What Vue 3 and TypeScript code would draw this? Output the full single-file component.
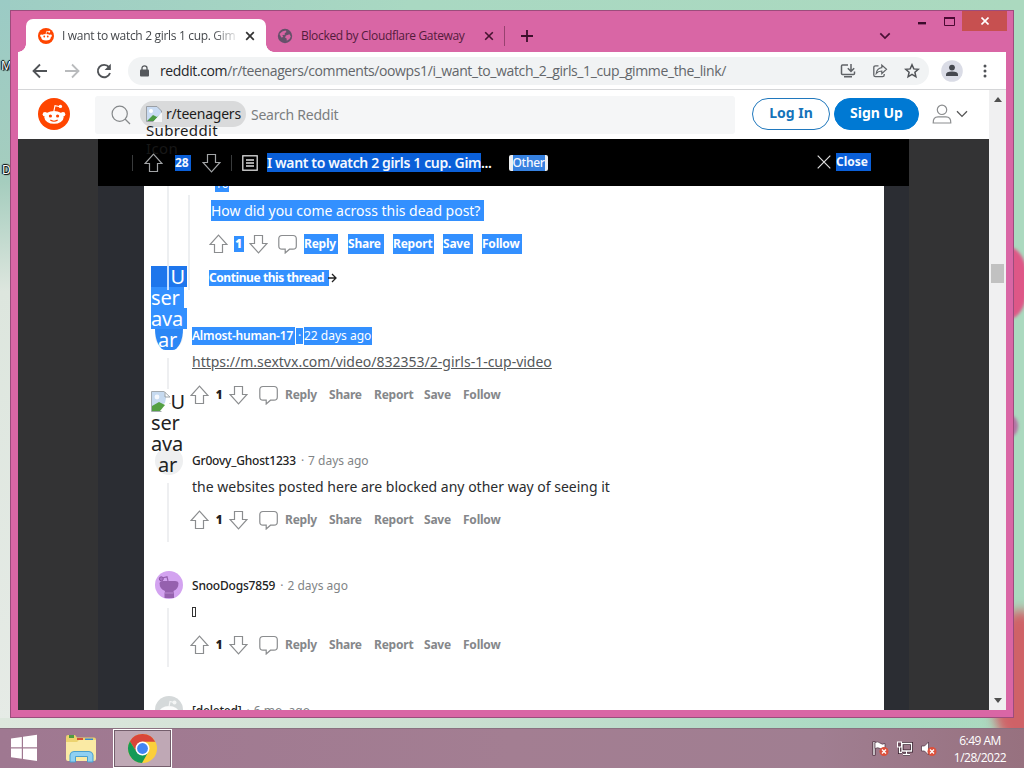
<script setup lang="ts">
interface Comment {
  user: string
  age: string
  body: string
  avatar: 'text' | 'snoo' | 'deleted'
  selected?: boolean
  link?: boolean
  missing?: boolean
}

const comments: Comment[] = [
  { user: 'Almost-human-17', age: '22 days ago', body: 'https://m.sextvx.com/video/832353/2-girls-1-cup-video', avatar: 'text', selected: true, link: true },
  { user: 'Gr0ovy_Ghost1233', age: '7 days ago', body: 'the websites posted here are blocked any other way of seeing it', avatar: 'text' },
  { user: 'SnooDogs7859', age: '2 days ago', body: '', avatar: 'snoo', missing: true },
  { user: '[deleted]', age: '6 mo. ago', body: '', avatar: 'deleted' },
]
const actions: string[] = ['Reply', 'Share', 'Report', 'Save', 'Follow']
const altLines: string[] = ['U', 'ser', 'ava', 'ar']
const upPath = 'M9.5 1.2 L18 10.5 H13.5 V18.5 H5.5 V10.5 H1 Z'
const downPath = 'M9.5 18.8 L18 9.5 H13.5 V1.5 H5.5 V9.5 H1 Z'
const bubblePath = 'M4 1.5 H15 Q18.3 1.5 18.3 4.8 V12 Q18.3 15.2 15 15.2 H11.5 L7.2 19 V15.2 H4 Q.8 15.2 .8 12 V4.8 Q.8 1.5 4 1.5 Z'
</script>

<template>
  <div class="desktop">
    <span class="shortcut first">M</span>
    <span class="shortcut second">D</span>
    <i class="petal p1"></i><i class="petal p2"></i><i class="petal p3"></i>

    <div class="window">
      <div class="titlebar">
        <div class="tab active">
          <svg class="fav" viewBox="0 0 32 32"><circle cx="16" cy="16" r="16" fill="#ff4500" /><ellipse cx="16" cy="18.5" rx="9.5" ry="6.5" fill="#fff" /><circle cx="6.7" cy="15.5" r="2.4" fill="#fff" /><circle cx="25.3" cy="15.5" r="2.4" fill="#fff" /><circle cx="12.5" cy="17" r="1.8" fill="#ff4500" /><circle cx="19.5" cy="17" r="1.8" fill="#ff4500" /><path d="M16 12 L17.5 6.5 L22 7.5" fill="none" stroke="#fff" stroke-width="1.5" /><circle cx="22.5" cy="7.5" r="1.9" fill="#fff" /></svg>
          <span class="tab-title one">I want to watch 2 girls 1 cup. Gim</span>
          <svg class="x" viewBox="0 0 10 10"><path d="M1.2 1.2 8.8 8.8M8.8 1.2 1.2 8.8" stroke="#333" stroke-width="1.7" /></svg>
        </div>
        <div class="tab idle">
          <svg class="globe" viewBox="0 0 16 16"><circle cx="8" cy="8" r="7.2" fill="#66506a" /><path d="M2.5 6 Q5 3 8.6 2.6 L9.5 4 7.6 5.2 8.2 6.6 5.3 7.3 6.3 9 4.3 9.4Z M9 7.5 L12.5 6.2 13.8 8.4 Q13 11.5 9.8 12.8 L9.6 10.4 8 9.5Z" fill="#d964a4" /></svg>
          <span class="tab-title two">Blocked by Cloudflare Gateway</span>
          <svg class="x" viewBox="0 0 10 10"><path d="M1.2 1.2 8.8 8.8M8.8 1.2 1.2 8.8" stroke="#45132f" stroke-width="1.6" /></svg>
          <i class="divider"></i>
          <svg class="plus" viewBox="0 0 12 12"><path d="M6 0V12M0 6H12" stroke="#3c0f2b" stroke-width="1.8" /></svg>
        </div>
        <svg class="tab-menu" viewBox="0 0 12 8"><path d="M1.3 1.3 6 6 10.7 1.3" fill="none" stroke="#4a0f35" stroke-width="1.7" /></svg>
        <div class="caption">
          <svg class="min" viewBox="0 0 8 3"><rect width="8" height="2.4" fill="#3b0b2b" /></svg>
          <svg class="max" viewBox="0 0 11 9"><path d="M.5 1.5H10.5V8.5H.5Z" fill="none" stroke="#4b0a33" /><path d="M0 1H11" stroke="#4b0a33" stroke-width="2" /></svg>
          <span class="close"><svg viewBox="0 0 8 8"><path d="M.5 .5 7.5 7.5M7.5 .5 .5 7.5" stroke="#fff" stroke-width="1.6" /></svg></span>
        </div>
      </div>

      <div class="client">
        <div class="toolbar">
          <svg class="nav back" viewBox="0 0 16 16"><path d="M15 8H2M8 1.5 1.5 8 8 14.5" fill="none" stroke="#505357" stroke-width="1.8" /></svg>
          <svg class="nav fwd" viewBox="0 0 16 16"><path d="M1 8H14M8 1.5 14.5 8 8 14.5" fill="none" stroke="#b9bbbd" stroke-width="1.8" /></svg>
          <svg class="nav reload" viewBox="0 0 16 16"><path d="M13 4.2A6.2 6.2 0 1 0 14 10" fill="none" stroke="#505357" stroke-width="1.9" /><path d="M14.8 .8V7H8.6Z" fill="#505357" /></svg>
          <div class="omnibox">
            <svg class="lock" viewBox="0 0 9 12"><rect y="4.5" width="9" height="7" rx="1" fill="#55585c" /><path d="M2 5V3a2.5 2.2 0 0 1 5 0V5" fill="none" stroke="#55585c" stroke-width="1.3" /></svg>
            <span class="url"><b>reddit.com</b>/r/teenagers/comments/oowps1/i_want_to_watch_2_girls_1_cup_gimme_the_link/</span>
            <svg class="oi" viewBox="0 0 16 16"><path d="M8 2H2.5Q1.5 2 1.5 3V10.5Q1.5 11.5 2.5 11.5H13.5Q14.5 11.5 14.5 10.5V8.5M4 13.8H12" fill="none" stroke="#606367" stroke-width="1.5" /><path d="M11 1V8M7.8 5.3 11 8.4 14.2 5.3" fill="none" stroke="#606367" stroke-width="1.5" /></svg>
            <svg class="oi" viewBox="0 0 16 16"><path d="M6.5 2.8H3.5Q1.8 2.8 1.8 4.5V12Q1.8 13.7 3.5 13.7H10.5Q12.2 13.7 12.2 12V11" fill="none" stroke="#606367" stroke-width="1.3" /><path d="M9.8 2V4.7Q5 5.3 4.3 10.4 6.3 8 9.8 8V10.6L14.5 6.3Z" fill="none" stroke="#606367" stroke-width="1.2" /></svg>
            <svg class="oi" viewBox="0 0 16 16"><path d="M8 1.8 9.8 5.9 14.3 6.3 10.9 9.3 11.9 13.8 8 11.4 4.1 13.8 5.1 9.3 1.7 6.3 6.2 5.9Z" fill="none" stroke="#505357" stroke-width="1.5" /></svg>
          </div>
          <svg class="profile" viewBox="0 0 22 22"><circle cx="11" cy="11" r="10.8" fill="#dadce6" /><circle cx="11" cy="7.6" r="2.9" fill="#45484f" /><path d="M5 16V14.5Q5 11.5 11 11.5T17 14.5V16Z" fill="#45484f" /></svg>
          <svg class="dots" viewBox="0 0 4 14"><circle v-for="n in 3" :key="n" cx="2" :cy="n * 5 - 3" r="1.5" fill="#505357" /></svg>
        </div>

        <div class="page">
          <div class="site">
            <header class="site-head">
              <svg class="logo" viewBox="0 0 32 32"><circle cx="16" cy="16" r="16" fill="#ff4500" /><ellipse cx="16" cy="19.4" rx="9.6" ry="6.4" fill="#fff" /><circle cx="7" cy="16.2" r="2.3" fill="#fff" /><circle cx="25" cy="16.2" r="2.3" fill="#fff" /><circle cx="12.4" cy="18" r="1.6" fill="#ff4500" /><circle cx="19.6" cy="18" r="1.6" fill="#ff4500" /><path d="M12.3 22Q16 24.4 19.7 22" fill="none" stroke="#ff4500" stroke-width="1.1" /><path d="M15.9 13.2 17 7.6 21 8.5" fill="none" stroke="#fff" stroke-width="1.1" /><circle cx="22.4" cy="8.4" r="1.7" fill="#fff" /></svg>
              <div class="search">
                <svg class="lens" viewBox="0 0 20 20"><circle cx="8.7" cy="8.7" r="7.6" fill="none" stroke="#85888a" stroke-width="1.2" /><path d="M14 14 19 19" stroke="#85888a" stroke-width="1.3" /></svg>
                <div class="chip">
                  <svg class="broken" viewBox="0 0 16 16"><path d="M.5 .5H11L15.5 5V15.5H.5Z" fill="#c9dbf2" stroke="#9a9fa5" /><path d="M1 15 7 9 11 11 15 8 8 15Z" fill="#4b9a42" /><circle cx="5" cy="5" r="2" fill="#fff" /><path d="M16 6 7 16H16Z" fill="#f5f6f7" /></svg>
                  <span>r/teenagers</span>
                  <em>Subreddit<br /><u>Icon</u></em>
                </div>
                <span class="placeholder">Search Reddit</span>
              </div>
              <button class="pill outline">Log In</button>
              <button class="pill solid">Sign Up</button>
              <svg class="person" viewBox="0 0 20 20"><circle cx="10" cy="5.8" r="4.7" fill="none" stroke="#8b8d8f" stroke-width="1.2" /><path d="M1.2 19Q1 12.8 6 12.8H14Q19 12.8 18.8 19Z" fill="none" stroke="#8b8d8f" stroke-width="1.2" /></svg>
              <svg class="chev" viewBox="0 0 12 8"><path d="M1 1.2 6 6.4 11 1.2" fill="none" stroke="#555" stroke-width="1.3" /></svg>
            </header>

            <div class="backdrop">
              <div class="lightbox">
                <div class="post-bar">
                  <i class="sep"></i>
                  <svg class="ic light up" viewBox="0 0 19 20"><path :d="upPath" /></svg>
                  <span class="score"><mark>28</mark></span>
                  <svg class="ic light" viewBox="0 0 19 20"><path :d="downPath" /></svg>
                  <i class="sep after"></i>
                  <svg class="doc" viewBox="0 0 16 16"><rect x=".8" y=".8" width="14.4" height="14.4" fill="none" stroke="#ddd" stroke-width="1.3" /><path d="M4 5H12M4 8H12M4 11H12" stroke="#ddd" stroke-width="1.3" /></svg>
                  <span class="post-title"><mark>I want to watch 2 girls 1 cup. Gim</mark>...</span>
                  <span class="flair"><mark>Other</mark></span>
                  <span class="closer"><svg viewBox="0 0 14 14"><path d="M.7 .7 13.3 13.3M13.3 .7 .7 13.3" stroke="#ddd" stroke-width="1.2" /></svg><mark>Close</mark></span>
                </div>

                <div class="thread">
                  <div class="nested">
                    <i class="rail r1"></i><i class="rail r2"></i>
                    <div class="cut"><mark>10</mark></div>
                    <p class="body"><mark>How did you come across this dead post?</mark></p>
                    <div class="actions sel">
                      <svg class="ic" viewBox="0 0 19 20"><path :d="upPath" /></svg>
                      <b class="n"><mark>1</mark></b>
                      <svg class="ic" viewBox="0 0 19 20"><path :d="downPath" /></svg>
                      <svg class="ic bubble" viewBox="0 0 19 20"><path :d="bubblePath" /></svg>
                      <span v-for="a in actions" :key="a" :class="['act', a.toLowerCase()]"><mark>{{ a }}</mark></span>
                    </div>
                    <div class="more"><mark>Continue this thread&nbsp;</mark><svg viewBox="0 0 9 10"><path d="M0 5H8M4 1 8 5 4 9" fill="none" stroke="#222" stroke-width="1.3" /></svg></div>
                  </div>

                  <article v-for="c in comments" :key="c.user" :class="['comment', { picked: c.selected }]">
                    <div class="gutter">
                      <div v-if="c.avatar === 'text'" class="alt">
                        <div class="disc"></div>
                        <div class="alt-text">
                          <span v-for="l in altLines" :key="l" :class="'l-' + l">{{ l }}</span>
                        </div>
                        <svg v-if="!c.selected" class="alt-pic" viewBox="0 0 20 21"><path d="M.5 .5H13L19 6M19 12V13M.5 .5V20.5H12" fill="none" stroke="#a4abb0" stroke-dasharray="30 2" /><path d="M1 1H13L15 7 14 12 1 19Z" fill="#c6daf0" /><path d="M1 20V15L8 11 14 14 9 20Z" fill="#54a043" /><circle cx="6" cy="6" r="2.4" fill="#f6f9fd" /><path d="M14 1V6H19" fill="none" stroke="#9aa1a6" /></svg>
                      </div>
                      <svg v-else-if="c.avatar === 'snoo'" class="avatar" viewBox="0 0 28 28"><circle cx="14" cy="14" r="14" fill="#d3a3f0" /><path d="M4.500 12Q5 9.500 9 10H19Q23 9.500 23.500 12 23.500 18 18.500 20L19 22.500V27H9.500V22.500L10 20Q4.500 18 4.500 12Z" fill="#9561ae" /><path d="M13 10 12 5.800 7 7" fill="none" stroke="#9561ae" stroke-width="1.2" /><circle cx="6.3" cy="7.8" r="2" fill="#a774c4" stroke="#8c55a3" /><path d="M10 22H18.5" stroke="#b889d0" /></svg>
                      <svg v-else class="avatar" viewBox="0 0 28 28"><circle cx="14" cy="14" r="14" fill="#d5d9da" /><ellipse cx="14" cy="17" rx="10" ry="7" fill="#fbfbfb" /><circle cx="19.5" cy="6.5" r="2" fill="#f4f5f5" /><path d="M14 11 15 5.5 19 6.5" fill="none" stroke="#f4f5f5" stroke-width="1.2" /></svg>
                      <i class="line"></i>
                    </div>
                    <div class="main">
                      <div class="meta">
                        <template v-if="c.selected"><mark class="user">{{ c.user }}</mark><mark class="dot">·</mark><mark class="age">{{ c.age }}</mark></template>
                        <template v-else><span class="user">{{ c.user }}</span><span class="dot">·</span><span class="age">{{ c.age }}</span></template>
                      </div>
                      <p :class="['body', { link: c.link }]"><i v-if="c.missing" class="tofu"></i>{{ c.body }}</p>
                      <div class="actions">
                        <svg class="ic" viewBox="0 0 19 20"><path :d="upPath" /></svg>
                        <b class="n">1</b>
                        <svg class="ic" viewBox="0 0 19 20"><path :d="downPath" /></svg>
                        <svg class="ic bubble" viewBox="0 0 19 20"><path :d="bubblePath" /></svg>
                        <span v-for="a in actions" :key="a" :class="['act', a.toLowerCase()]">{{ a }}</span>
                      </div>
                    </div>
                  </article>
                </div>
              </div>
            </div>
          </div>
          <div class="scroll"><i class="tri t"></i><i class="thumb"></i><i class="tri b"></i></div>
        </div>
      </div>
    </div>

    <footer class="taskbar">
      <svg class="start" viewBox="0 0 28 28"><path d="M1 4.5 11.8 3V13.2H1ZM13 2.8 27 .8V13.2H13ZM1 14.4H11.8V24.8L1 23.2ZM13 14.4H27V27L13 25Z" fill="#fff" /></svg>
      <svg class="explorer" viewBox="0 0 32 29"><path d="M1 3Q1 1 3 1H10L12 3.5H29Q31 3.5 31 5.5V25H1Z" fill="#ecd36f" /><rect x="4" y="1" width="5" height="3" fill="#4e9a43" /><path d="M12 4H18V6H12Z" fill="#d44f35" /><path d="M20 5.5H28" stroke="#3889ce" stroke-width="2" /><path d="M1 8H12L14 6H31V25Q31 27 29 27H3Q1 27 1 25Z" fill="#faeaa4" /><path d="M5 28V21Q5.500 17.500 9 17.500H24Q27.500 17.500 28 21V28H22.500V22.500H10.500V28Z" fill="#8fd0f2" stroke="#4b9fce" /></svg>
      <div class="task">
        <svg viewBox="0 0 32 32"><circle cx="16" cy="16" r="15" fill="#fbcf3b" /><path d="M3 8.5A15 15 0 0 1 29.2 9H16L9.8 19.6Z" fill="#d9453a" /><path d="M3 8.5 9.9 19.5 16 23 21.8 19.8 15.5 31A15 15 0 0 1 3 8.5Z" fill="#149a57" /><circle cx="16" cy="16" r="7.2" fill="#fff" /><circle cx="16" cy="16" r="5.6" fill="#4285f4" /></svg>
      </div>
      <div class="tray">
        <svg viewBox="0 0 17 17"><path d="M2 1.5V15.5" stroke="#39202f" stroke-width="3" /><path d="M2 2V15" stroke="#fff" stroke-width="1.4" /><path d="M3 2.5Q6 1 8 3T13 3.5V9Q10 10 8 8.5T3 8.5Z" fill="#fff" stroke="#4b3040" stroke-width=".7" /><circle cx="12" cy="11.5" r="4.5" fill="#dc503c" /><path d="M10 9.5 14 13.5M14 9.5 10 13.5" stroke="#fff" stroke-width="1.3" /></svg>
        <svg viewBox="0 0 17 17"><path d="M6 3.5H15.5V11H6ZM10.5 11V14M7 14.5H14M3.5 6V12.5H6" fill="none" stroke="#39202f" stroke-width="3" /><path d="M6 3.5H15.5V11H6ZM10.5 11V14M7 14.5H14M3.5 6V12.5H6" fill="none" stroke="#fff" stroke-width="1.3" /><rect x="1.5" y="2" width="4" height="5" fill="#6d4c5d" stroke="#fff" /></svg>
        <svg viewBox="0 0 17 17"><path d="M1.5 6H4.5L8.5 2V15L4.5 11H1.5Z" fill="#fff" stroke="#4b3040" stroke-width=".7" /><circle cx="12" cy="11.5" r="4.5" fill="#dc503c" /><path d="M10 9.5 14 13.5M14 9.5 10 13.5" stroke="#fff" stroke-width="1.3" /></svg>
      </div>
      <div class="clock"><span>6:49 AM</span><span class="date">1/28/2022</span></div>
    </footer>
  </div>
</template>

<style>
body { margin: 0; overflow: hidden; }
</style>

<style scoped>
* { box-sizing: border-box; }
svg { display: block; flex: none; }
i, em, u { font-style: normal; text-decoration: none; }
mark { background: #3390ff; color: #fff; }
.desktop { position: relative; width: 1024px; height: 768px; overflow: hidden; display: flex; flex-direction: column; background: linear-gradient(90deg, #9ecdc4, #a9d8c2 40%, #abd9bf); font-family: "Noto Sans", "Open Sans", sans-serif; }
.desktop::before { content: ""; position: absolute; left: 0; top: 0; width: 10px; height: 728px; background: linear-gradient(#9bcbc5, #a5cdbe 25%, #dde6de 40%, #e6ebe6); }
.desktop::after { content: ""; position: absolute; left: 0; top: 718px; width: 1000px; height: 10px; background: linear-gradient(90deg, #dde7dd, #cbdfd1 45%, #aadac3 85%, transparent); }
.shortcut { position: absolute; left: 1px; font: 12px/14px "Noto Sans", sans-serif; color: #fff; text-shadow: 0 0 1px #000, 1px 1px 1px #000, -1px 0 1px #000, 0 -1px 1px #000; z-index: 1; }
.first { top: 59px; }
.second { top: 163px; left: 2px; }
.petal { position: absolute; border-radius: 50%; filter: blur(1.5px); }
.p1 { left: 990px; top: 247px; width: 38px; height: 72px; background: #de5787; }
.p2 { left: 996px; top: 414px; width: 22px; height: 24px; background: #b472a4; }
.p3 { left: 990px; top: 610px; width: 60px; height: 140px; background: #cf6267; filter: blur(6px); }

.window { position: relative; z-index: 2; width: 1004px; height: 708px; margin: 10px 0 0 10px; border: 1px solid #9c4c7c; background: #d966a5; padding: 0 7px; flex: none; }
.titlebar { height: 41px; display: flex; align-items: flex-start; }
.tab { height: 33px; margin-top: 8px; display: flex; align-items: center; }
.tab.active { position: relative; width: 240px; margin-left: 8px; background: #fff; border-radius: 7px 7px 0 0; padding-left: 12px; }
.tab.active::before, .tab.active::after { content: ""; position: absolute; bottom: 0; width: 8px; height: 8px; }
.tab.active::before { left: -8px; background: radial-gradient(circle at 0 0, transparent 7.5px, #fff 8px); }
.tab.active::after { right: -8px; background: radial-gradient(circle at 100% 0, transparent 7.5px, #fff 8px); }
.fav { width: 16px; height: 16px; }
.tab-title { font: 12px/16px "Open Sans", "Noto Sans", sans-serif; white-space: nowrap; }
.one { width: 175px; margin-left: 8px; color: #45484c; letter-spacing: -.32px; -webkit-mask-image: linear-gradient(90deg, #000 150px, transparent 178px); mask-image: linear-gradient(90deg, #000 150px, transparent 178px); }
.x { width: 10px; height: 10px; margin-left: 8px; }
.idle { padding-left: 11px; }
.globe { width: 16px; height: 16px; }
.two { width: 167px; margin-left: 8px; color: #541b3c; letter-spacing: -.33px; }
.idle .x { margin-left: 16px; }
.divider { width: 1px; height: 20px; background: #97426f; margin: 0 16px 0 10px; }
.plus { width: 12px; height: 12px; }
.tab-menu { width: 12px; height: 8px; margin: 21px 0 0 auto; }
.caption { display: flex; align-items: flex-start; margin-left: 27px; margin-right: -1px; }
.min { width: 8px; height: 3px; margin-top: 11px; }
.max { width: 11px; height: 9px; margin: 6px 7px 0 18px; }
.close { width: 45px; height: 20px; background: #c75050; display: flex; align-items: center; justify-content: center; }
.close svg { width: 8px; height: 8px; }

.client { width: 988px; height: 658px; background: #fff; display: flex; flex-direction: column; }
.toolbar { height: 38px; flex: none; display: flex; align-items: center; border-bottom: 1px solid #d5d6d8; padding-left: 14px; }
.nav { width: 16px; height: 16px; }
.fwd { margin-left: 16px; }
.reload { margin-left: 16px; }
.omnibox { width: 801px; height: 28px; margin-left: 16px; background: #f1f3f4; border-radius: 14px; display: flex; align-items: center; padding-left: 12px; }
.lock { width: 9px; height: 12px; }
.url { width: 680px; flex: none; margin: 0 0 0 11px; font: 14px/20px "Open Sans", "Noto Sans", sans-serif; letter-spacing: -.385px; color: #63666a; white-space: nowrap; }
.url b { font-weight: 400; color: #25272a; }
.oi { width: 16px; height: 16px; margin-right: 16px; }
.profile { width: 22px; height: 22px; margin-left: 12px; }
.dots { width: 4px; height: 14px; margin-left: 20px; }

.page { flex: 1; min-height: 0; display: flex; }
.site { width: 971px; display: flex; flex-direction: column; }
.scroll { width: 17px; background: #f0f0f1; display: flex; flex-direction: column; align-items: center; padding-bottom: 7px; }
.tri { border: 4px solid transparent; }
.tri.t { border-bottom: 5px solid #505050; border-top: 0; margin-top: 7px; }
.tri.b { border-top: 5px solid #505050; border-bottom: 0; margin-top: auto; }
.thumb { width: 13px; height: 19px; background: #c1c1c1; margin-top: 162px; }

.site-head { position: relative; z-index: 3; height: 49px; flex: none; display: flex; align-items: center; padding-left: 20px; background: #fff; }
.logo { width: 32px; height: 32px; margin-top: -1px; }
.search { width: 640px; height: 38px; margin-left: 25px; background: #f5f6f7; border-radius: 3px; display: flex; align-items: center; padding-left: 16px; }
.lens { width: 20px; height: 20px; }
.chip { position: relative; width: 106px; height: 26px; margin-left: 9px; margin-top: -1px; border-radius: 13px; background: #d9dadb; display: flex; align-items: center; padding-left: 6px; font: 14px/20px "Noto Sans", sans-serif; letter-spacing: -.22px; color: #1c1c1c; white-space: nowrap; }
.broken { width: 16px; height: 16px; margin-right: 4px; }
.chip em { position: absolute; left: 6px; top: 20px; line-height: 18px; letter-spacing: .35px; font-size: 15px; }
.chip u { color: #171717; }
.placeholder { margin-left: 5px; margin-top: -1px; font-size: 14px; color: #7b7e80; letter-spacing: -.24px; }
.pill { height: 32px; border-radius: 16px; border: 1px solid #2078bd; font: 700 14px/20px "Noto Sans", sans-serif; padding: 0 0 2px; margin-top: -1px; }
.outline { width: 78px; margin-left: 17px; background: #fff; color: #1573ba; }
.solid { width: 85px; margin-left: 4px; background: #0079d3; border-color: #0079d3; color: #fff; }
.person { width: 20px; height: 20px; margin-left: 13px; margin-top: -1px; }
.chev { width: 12px; height: 8px; margin-left: 4px; margin-top: -1px; }

.backdrop { flex: 1; min-height: 0; background: #333334; padding-left: 80px; overflow: hidden; }
.lightbox { width: 811px; height: 571px; background: #2b2d33; }
.post-bar { height: 47px; background: #000; display: flex; align-items: center; padding: 0 38px 0 34px; color: #fff; font-weight: 700; font-size: 14px; }
.post-bar mark { background: #0a5fd8; color: #f4f8ff; }
.ic { width: 19px; height: 20px; fill: none; stroke: #8b8d8f; stroke-width: 1.2; }
.ic.light { stroke: #a2a4a6; }
.sep { width: 1px; height: 16px; background: #393b3c; }
.up { margin-left: 11px; }
.score { width: 39px; font-size: 12px; padding-left: 12px; }
.score mark { display: block; width: 16px; height: 16px; line-height: 16px; }
.after { margin: 0 10px 0 10px; }
.doc { width: 16px; height: 16px; }
.post-title { width: 233px; margin-left: 9px; white-space: nowrap; line-height: 18px; letter-spacing: -.36px; font-weight: 600; }
.flair { width: 39px; height: 16px; margin-left: 9px; background: #edeff1; border-radius: 2px; font-size: 12px; font-weight: 500; line-height: 16px; text-align: center; }
.flair mark { display: inline-block; height: 16px; background: #3681e0; letter-spacing: -.3px; }
.closer { margin-left: auto; display: flex; align-items: center; font-size: 12px; padding-bottom: 1px; }
.closer svg { width: 14px; height: 14px; margin-right: 5px; }
.closer mark { width: 35px; height: 18px; line-height: 18px; }

.thread { width: 740px; height: 524px; margin-left: 46px; background: #fff; overflow: hidden; }
.nested { position: relative; height: 136px; padding-left: 66px; }
.rail { position: absolute; width: 2px; background: #edeff1; }
.r1 { left: 23px; top: 0; height: 104px; }
.r2 { left: 44px; top: 9px; height: 95px; }
.cut { height: 6px; overflow: hidden; padding-left: 5px; font-size: 12px; }
.cut mark { display: block; width: 14px; height: 16px; line-height: 16px; margin-top: -10px; color: #fff; }
.body { margin: 0; font-size: 14px; line-height: 21px; height: 21px; color: #2a2c2e; white-space: nowrap; }
.nested .body { margin-top: 8px; padding-left: 1px; }
.nested .body mark { display: inline-block; width: 273px; height: 21px; letter-spacing: -.02px; }
.actions { height: 20px; display: flex; align-items: center; font-size: 12px; font-weight: 700; color: #85878a; }
.nested .actions { margin-top: 13px; margin-left: -1px; }
.n { width: 21px; text-align: center; color: #222; font-size: 11.5px; line-height: 16px; }
.n mark { display: inline-block; width: 10px; height: 16px; }
.bubble { margin-left: 10px; margin-right: 7px; }
.act { line-height: 20px; white-space: nowrap; letter-spacing: -.22px; }
.act mark { display: block; }
.act.reply { width: 44px; } .act.share { width: 45px; } .act.report { width: 50px; } .act.save { width: 39px; } .act.follow { width: 40px; }
.reply mark { width: 34px; } .share mark { width: 36px; } .report mark { width: 41px; } .save mark { width: 30px; } .follow mark { width: 40px; }
.more { display: flex; align-items: center; height: 16px; margin: 16px 0 0 -1px; font-size: 12px; font-weight: 700; line-height: 16px; }
.more mark { width: 120px; white-space: nowrap; letter-spacing: -.42px; }
.more svg { width: 9px; height: 10px; margin-left: -1px; }

.comment { position: relative; height: 125px; display: flex; }
.gutter { position: relative; width: 48px; }
.avatar { position: absolute; left: 11px; top: -1px; width: 28px; height: 28px; }
.line { position: absolute; left: 23px; top: 36px; width: 2px; height: 59px; background: #eeeff1; }
.picked .line { height: 31px; }
.alt { position: absolute; left: 7px; top: -56px; width: 36px; height: 84px; }
.disc { position: absolute; left: 4px; top: 56px; width: 28px; height: 28px; border-radius: 50%; background: #eeeff0; }
.alt-text { position: absolute; inset: 0; display: flex; flex-direction: column; font-size: 20px; line-height: 21px; color: #222; letter-spacing: -.2px; }
.alt-text span { height: 21px; }
.alt-text .l-U { text-align: right; padding-right: 2px; }
.alt-text .l-ar { text-align: center; padding-right: 3px; }
.alt-pic { position: absolute; left: 0; top: 0; width: 20px; height: 21px; }
.picked .alt-text { color: #fff; }
.picked .alt-text span { background: #3390ff; }
.picked .alt-text .l-U { background: #1e76ec; }
.picked .alt-text .l-ser { width: 33px; }
.picked .alt-text .l-ar { height: 28px; margin: 0 4px; padding: 0 3px 0 0; border-radius: 0 0 14px 14px / 0 0 28px 28px; background: #2b87f5; }
.picked .alt::after { content: ""; position: absolute; left: 16px; top: 0; width: 2px; height: 24px; background: #c8e0ff; }

.main { display: flex; flex-direction: column; }
.meta { height: 28px; display: flex; align-items: center; font-size: 12px; line-height: 16px; white-space: nowrap; }
.user { color: #222; letter-spacing: -.2px; font-weight: 500; }
.dot { margin: 0 4px 0 5px; color: #85878a; }
.age { color: #818486; }
mark.user { width: 103px; color: #fff; font-weight: 600; height: 18px; line-height: 18px; letter-spacing: -.2px; }
mark.dot { width: 7px; margin: 0 1px; text-align: center; color: #fff; height: 16px; }
mark.age { width: 68px; color: #fff; height: 18px; line-height: 18px; }
.main .body { margin-top: 1px; }
.body.link { text-decoration: underline; color: #55585a; }
.tofu { display: inline-block; width: 4px; height: 10px; border: 1px solid #333; }
.main .actions { margin-top: 13px; margin-left: -2px; }
.main .actions .bubble { margin-left: 11px; }
.main .actions .n { width: 20px; }

.taskbar { z-index: 1; margin-top: 10px; height: 40px; flex: none; border-top: 1px solid #8a7180; background: linear-gradient(90deg, #9f7891, #a37e92 50%, #a07e91 80%, #97717f); display: flex; align-items: center; position: relative; padding-left: 10px; }
.start { width: 28px; height: 28px; margin-top: -2px; }
.explorer { width: 32px; height: 29px; margin-left: 27px; }
.task { width: 59px; height: 39px; margin-left: 16px; border: 1px solid #fff; outline: 1px solid #745e6c; outline-offset: -2px; background: #bfa8b5; display: flex; align-items: center; justify-content: center; }
.task svg { width: 31px; height: 31px; }
.tray { margin-left: auto; display: flex; gap: 7px; }
.tray svg { width: 17px; height: 17px; }
.clock { width: 74px; margin-left: 6px; margin-right: 7px; display: flex; flex-direction: column; align-items: center; font: 12px/17px "Open Sans", "Noto Sans", sans-serif; color: #fff; letter-spacing: -.5px; }
</style>
